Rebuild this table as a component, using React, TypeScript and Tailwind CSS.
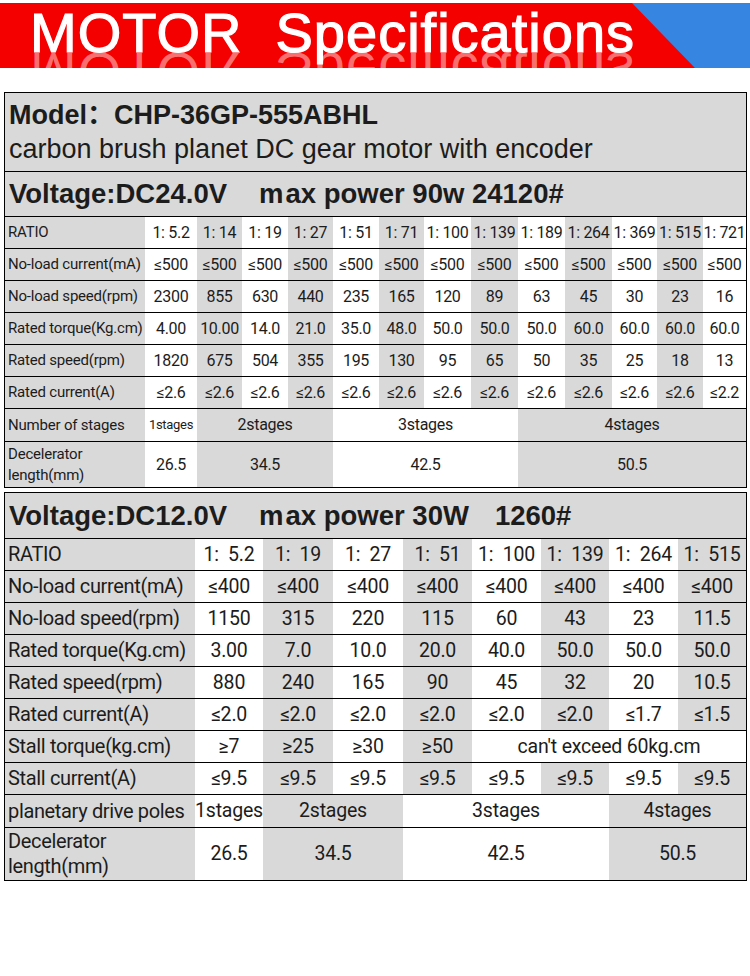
import React from "react"

type Cell = { t: string; span?: number; g?: boolean }

const SPAN: Record<number, string> = {
  1: "",
  2: "col-span-2",
  3: "col-span-3",
  4: "col-span-4",
  5: "col-span-5",
}

const COLS1 = "grid grid-cols-[140px_52px_45px_46px_45px_46px_45px_47px_47px_47px_47px_45px_46px_43px]"
const COLS2 = "grid grid-cols-[190px_68px_70px_70px_69px_69px_68px_69px_68px]"

const head = { fontFamily: '"Liberation Sans", Arial, "Noto Sans CJK SC", sans-serif' }
const body = { fontFamily: 'Roboto, "Noto Sans", sans-serif' }

// alternating columns: first data column white, then grey
const alt = (vals: string[]): Cell[] => vals.map((t, i) => ({ t, g: i % 2 === 1 }))
const rep = (v: string, n: number) => Array.from({ length: n }, () => v)

const table1: { label: React.ReactNode; cells: Cell[]; h: string; small?: boolean }[] = [
  { label: "RATIO", h: "h-[32px]", cells: alt(["1: 5.2", "1: 14", "1: 19", "1: 27", "1: 51", "1: 71", "1: 100", "1: 139", "1: 189", "1: 264", "1: 369", "1: 515", "1: 721"]) },
  { label: "No-load current(mA)", h: "h-[32px]", cells: alt(rep("≤500", 13)) },
  { label: "No-load speed(rpm)", h: "h-[32px]", cells: alt(["2300", "855", "630", "440", "235", "165", "120", "89", "63", "45", "30", "23", "16"]) },
  { label: "Rated torque(Kg.cm)", h: "h-[32px]", cells: alt(["4.00", "10.00", "14.0", "21.0", "35.0", "48.0", "50.0", "50.0", "50.0", "60.0", "60.0", "60.0", "60.0"]) },
  { label: "Rated speed(rpm)", h: "h-[32px]", cells: alt(["1820", "675", "504", "355", "195", "130", "95", "65", "50", "35", "25", "18", "13"]) },
  { label: "Rated current(A)", h: "h-[32px]", cells: alt([...rep("≤2.6", 12), "≤2.2"]) },
  {
    label: "Number of stages",
    h: "h-[33px]",
    small: true,
    cells: [
      { t: "1stages" },
      { t: "2stages", span: 3, g: true },
      { t: "3stages", span: 4 },
      { t: "4stages", span: 5, g: true },
    ],
  },
  {
    label: (
      <>
        Decelerator
        <br />
        length(mm)
      </>
    ),
    h: "h-[46px]",
    cells: [
      { t: "26.5" },
      { t: "34.5", span: 3, g: true },
      { t: "42.5", span: 4 },
      { t: "50.5", span: 5, g: true },
    ],
  },
]

const table2: { label: React.ReactNode; cells: Cell[]; h: string }[] = [
  { label: "RATIO", h: "h-[32px]", cells: alt(["1:\u00a0\u00a05.2", "1:\u00a0\u00a019", "1:\u00a0\u00a027", "1:\u00a0\u00a051", "1:\u00a0\u00a0100", "1:\u00a0\u00a0139", "1:\u00a0\u00a0264", "1:\u00a0\u00a0515"]) },
  { label: "No-load current(mA)", h: "h-[32px]", cells: alt(rep("≤400", 8)) },
  { label: "No-load speed(rpm)", h: "h-[32px]", cells: alt(["1150", "315", "220", "115", "60", "43", "23", "11.5"]) },
  { label: "Rated torque(Kg.cm)", h: "h-[32px]", cells: alt(["3.00", "7.0", "10.0", "20.0", "40.0", "50.0", "50.0", "50.0"]) },
  { label: "Rated speed(rpm)", h: "h-[32px]", cells: alt(["880", "240", "165", "90", "45", "32", "20", "10.5"]) },
  { label: "Rated current(A)", h: "h-[32px]", cells: alt([...rep("≤2.0", 6), "≤1.7", "≤1.5"]) },
  {
    label: "Stall torque(kg.cm)",
    h: "h-[32px]",
    cells: [...alt(["≥7", "≥25", "≥30", "≥50"]), { t: "can't exceed 60kg.cm", span: 4 }],
  },
  { label: "Stall current(A)", h: "h-[32px]", cells: alt(rep("≤9.5", 8)) },
  {
    label: "planetary drive poles",
    h: "h-[33px]",
    cells: [
      { t: "1stages" },
      { t: "2stages", span: 2, g: true },
      { t: "3stages", span: 3 },
      { t: "4stages", span: 2, g: true },
    ],
  },
  {
    label: (
      <>
        Decelerator
        <br />
        length(mm)
      </>
    ),
    h: "h-[53px]",
    cells: [
      { t: "26.5" },
      { t: "34.5", span: 2, g: true },
      { t: "42.5", span: 3 },
      { t: "50.5", span: 2, g: true },
    ],
  },
]

const Banner = () => (
  <div className="relative mt-[3px] h-[65px] overflow-hidden bg-[#f50000]">
    <svg className="absolute right-0 top-0" width="118" height="65" viewBox="0 0 118 65">
      <polygon points="0,0 118,0 118,65 63,65" fill="#3686e1" />
    </svg>
    <div
      className="pointer-events-none absolute left-[30px] top-[41px] -scale-y-100 whitespace-pre text-[56px] leading-[56px] tracking-[1px] text-white/45"
      style={head}
    >
      MOTOR  Specifications
    </div>
    <div
      className="relative whitespace-pre pl-[30px] pt-[2px] text-[56px] leading-[56px] tracking-[1px] text-white [-webkit-text-stroke:1.2px_white]"
      style={head}
    >
      MOTOR  Specifications
    </div>
  </div>
)

export default function App() {
  return (
    <div className="min-h-[976px] w-[750px] bg-white text-[#1c1c1c]">
      <Banner />

      {/* 24V table */}
      <div className="ml-[4px] mt-[24px] w-[743px] border border-black">
        <div className="h-[78px] bg-[#d9d9d9] pl-[4px] pt-[5px]" style={head}>
          <div className="text-[27px] font-bold leading-[34px]">Model：CHP-36GP-555ABHL</div>
          <div className="text-[27px] leading-[34px]">carbon brush planet DC gear motor with encoder</div>
        </div>
        <div className="flex h-[45px] items-center border-t border-black bg-[#d9d9d9] pl-[4px]" style={head}>
          <span className="text-[27.5px] font-bold">Voltage:DC24.0V</span>
          <span className="ml-[32px] text-[27.5px] font-bold">
            <span className="tracking-[2px]">m</span>ax power 90w 24120#
          </span>
        </div>
        {table1.map((r, i) => (
          <div key={i} className={`${COLS1} ${r.h} border-t border-black`} style={body}>
            <div className="flex items-center bg-[#d9d9d9] pl-[3px] text-[15px] leading-[21px] tracking-[-0.2px]">
              {r.label}
            </div>
            {r.cells.map((c, j) => (
              <div
                key={j}
                className={`${SPAN[c.span ?? 1]} flex items-center justify-center whitespace-nowrap tracking-[-0.3px] ${
                  r.small && j === 0 ? "text-[13px]" : "text-[16px]"
                } ${c.g ? "bg-[#d9d9d9]" : "bg-white"}`}
              >
                {c.t}
              </div>
            ))}
          </div>
        ))}
      </div>

      {/* 12V table */}
      <div className="ml-[4px] mt-[4px] w-[743px] border border-black">
        <div className="flex h-[45px] items-center bg-[#d9d9d9] pl-[4px]" style={head}>
          <span className="text-[27.5px] font-bold">Voltage:DC12.0V</span>
          <span className="ml-[32px] text-[27.5px] font-bold">
            <span className="tracking-[2px]">m</span>ax power 30W
          </span>
          <span className="ml-[26px] text-[27.5px] font-bold">1260#</span>
        </div>
        {table2.map((r, i) => (
          <div key={i} className={`${COLS2} ${r.h} border-t border-black`} style={body}>
            <div className="flex items-center bg-[#d9d9d9] pl-[3px] text-[20px] leading-[25px] tracking-[-0.35px]">
              {r.label}
            </div>
            {r.cells.map((c, j) => (
              <div
                key={j}
                className={`${SPAN[c.span ?? 1]} flex items-center justify-center whitespace-nowrap text-[19.5px] tracking-[-0.2px] ${
                  c.g ? "bg-[#d9d9d9]" : "bg-white"
                }`}
              >
                {c.t}
              </div>
            ))}
          </div>
        ))}
      </div>
    </div>
  )
}
